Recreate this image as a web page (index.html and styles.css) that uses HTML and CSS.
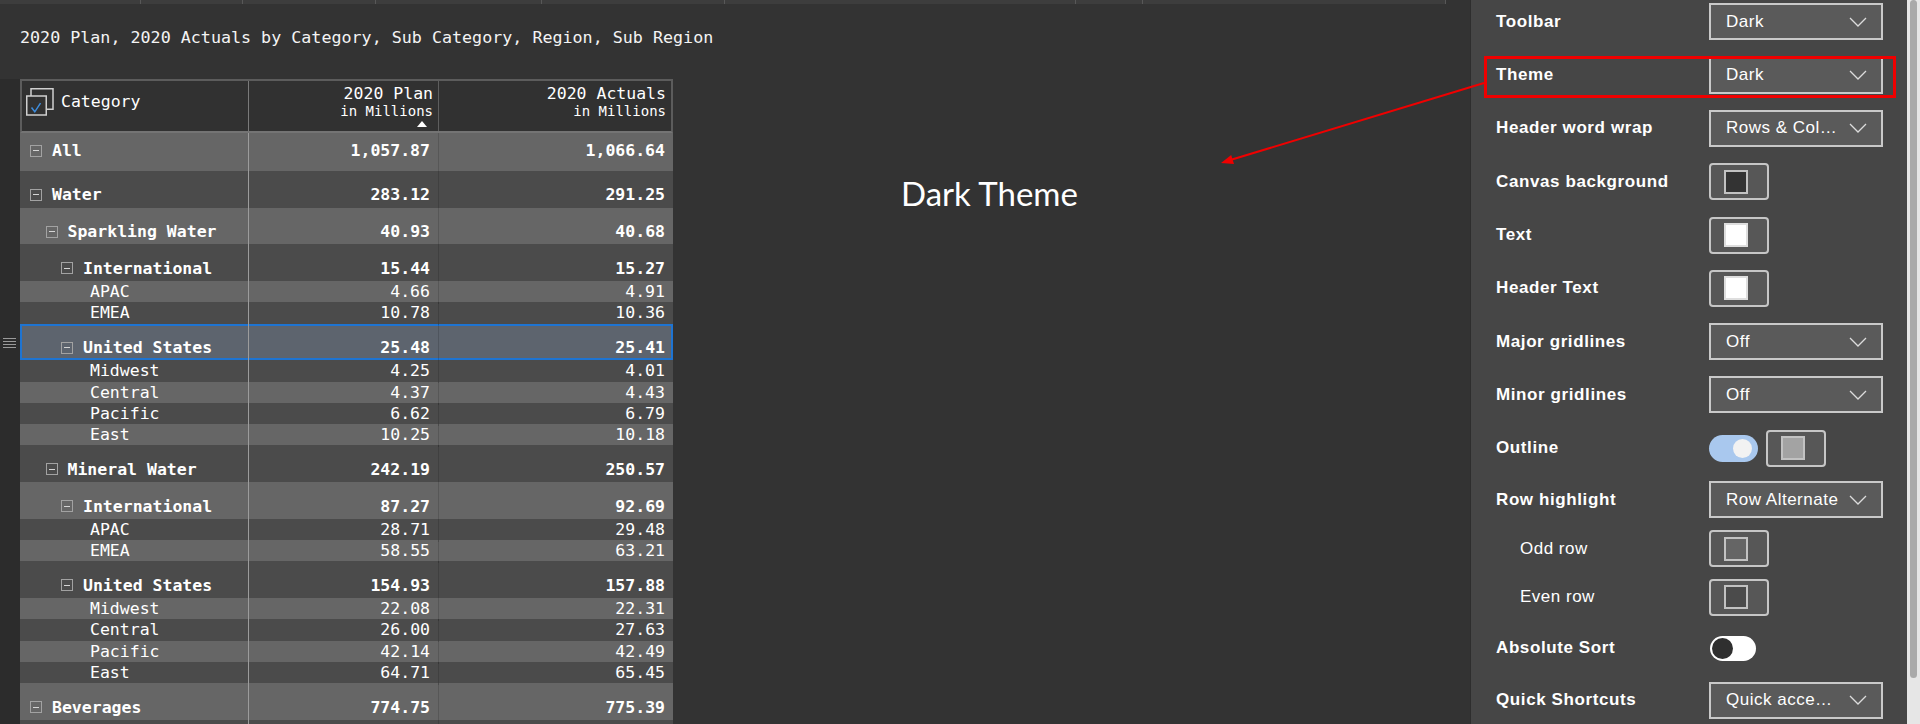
FILE: index.html
```html
<!DOCTYPE html>
<html lang="en">
<head>
<meta charset="utf-8">
<title>Dark Theme</title>
<link rel="stylesheet" href="styles.css">
</head>
<body>
<div class="app">
  <main class="canvas">
    <div class="topstrip"><span></span><span></span><span></span><span></span><span></span><span></span><span></span><span></span></div>
    <h1 class="title">2020 Plan, 2020 Actuals by Category, Sub Category, Region, Sub Region</h1>
    <section class="visual">
      <div class="gutter"><span class="grip"></span></div>
      <div class="matrix">
        <div class="mrow head">
          <div class="hcell hfirst">
            <svg class="pick" width="28" height="28" viewBox="0 0 28 28">
              <rect x="5" y="0.75" width="22" height="20.5" fill="none" stroke="#cfcfcf" stroke-width="1.5"/>
              <rect x="0.75" y="8" width="19.5" height="19" fill="#313131" stroke="#cfcfcf" stroke-width="1.5"/>
              <path d="M5.5 19.5 L8.8 23.8 L14.5 15.2" fill="none" stroke="#3e8ddd" stroke-width="1.5"/>
            </svg>
            <span>Category</span>
          </div>
          <div class="hcell hnum h2"><span class="hmain">2020 Plan</span><span class="hsub">in Millions</span><span class="sort"></span></div>
          <div class="hcell hnum h3"><span class="hmain">2020 Actuals</span><span class="hsub">in Millions</span></div>
        </div>

        <div class="mrow all light"><div class="cell c1 l0"><span class="tog"></span>All</div><div class="cell c2 num">1,057.87</div><div class="cell num">1,066.64</div></div>
        <div class="mrow prow dark"><div class="cell c1 l0"><span class="tog"></span>Water</div><div class="cell c2 num">283.12</div><div class="cell num">291.25</div></div>
        <div class="mrow prow light"><div class="cell c1 l1"><span class="tog"></span>Sparkling Water</div><div class="cell c2 num">40.93</div><div class="cell num">40.68</div></div>
        <div class="mrow prow dark"><div class="cell c1 l2"><span class="tog"></span>International</div><div class="cell c2 num">15.44</div><div class="cell num">15.27</div></div>
        <div class="mrow leaf light"><div class="cell c1 l3">APAC</div><div class="cell c2 num">4.66</div><div class="cell num">4.91</div></div>
        <div class="mrow leaf dark"><div class="cell c1 l3">EMEA</div><div class="cell c2 num">10.78</div><div class="cell num">10.36</div></div>
        <div class="mrow prow sel"><div class="cell c1 l2"><span class="tog"></span>United States</div><div class="cell c2 num">25.48</div><div class="cell num">25.41</div></div>
        <div class="mrow leaf dark"><div class="cell c1 l3">Midwest</div><div class="cell c2 num">4.25</div><div class="cell num">4.01</div></div>
        <div class="mrow leaf light"><div class="cell c1 l3">Central</div><div class="cell c2 num">4.37</div><div class="cell num">4.43</div></div>
        <div class="mrow leaf dark"><div class="cell c1 l3">Pacific</div><div class="cell c2 num">6.62</div><div class="cell num">6.79</div></div>
        <div class="mrow leaf light"><div class="cell c1 l3">East</div><div class="cell c2 num">10.25</div><div class="cell num">10.18</div></div>
        <div class="mrow prow dark"><div class="cell c1 l1"><span class="tog"></span>Mineral Water</div><div class="cell c2 num">242.19</div><div class="cell num">250.57</div></div>
        <div class="mrow prow light"><div class="cell c1 l2"><span class="tog"></span>International</div><div class="cell c2 num">87.27</div><div class="cell num">92.69</div></div>
        <div class="mrow leaf dark"><div class="cell c1 l3">APAC</div><div class="cell c2 num">28.71</div><div class="cell num">29.48</div></div>
        <div class="mrow leaf light"><div class="cell c1 l3">EMEA</div><div class="cell c2 num">58.55</div><div class="cell num">63.21</div></div>
        <div class="mrow prow dark"><div class="cell c1 l2"><span class="tog"></span>United States</div><div class="cell c2 num">154.93</div><div class="cell num">157.88</div></div>
        <div class="mrow leaf light"><div class="cell c1 l3">Midwest</div><div class="cell c2 num">22.08</div><div class="cell num">22.31</div></div>
        <div class="mrow leaf dark"><div class="cell c1 l3">Central</div><div class="cell c2 num">26.00</div><div class="cell num">27.63</div></div>
        <div class="mrow leaf light"><div class="cell c1 l3">Pacific</div><div class="cell c2 num">42.14</div><div class="cell num">42.49</div></div>
        <div class="mrow leaf dark"><div class="cell c1 l3">East</div><div class="cell c2 num">64.71</div><div class="cell num">65.45</div></div>
        <div class="mrow prow light"><div class="cell c1 l0"><span class="tog"></span>Beverages</div><div class="cell c2 num">774.75</div><div class="cell num">775.39</div></div>
        <div class="mrow prow dark"><div class="cell c1 l1"></div><div class="cell c2 num"></div><div class="cell num"></div></div>
      </div>
    </section>
    <div class="canvas-text">Dark Theme</div>
  </main>

  <aside class="pane">
    <div class="props">
      <div class="prop"><span class="plabel">Toolbar</span><div class="dd"><span>Dark</span><svg class="chev" width="18" height="10" viewBox="0 0 18 10"><polyline points="1,1 9,9 17,1" fill="none" stroke="#dcdcdc" stroke-width="1.3"/></svg></div></div>
      <div class="prop"><span class="plabel">Theme</span><div class="dd"><span>Dark</span><svg class="chev" width="18" height="10" viewBox="0 0 18 10"><polyline points="1,1 9,9 17,1" fill="none" stroke="#dcdcdc" stroke-width="1.3"/></svg></div><span class="hl"></span></div>
      <div class="prop"><span class="plabel">Header word wrap</span><div class="dd"><span>Rows &amp; Col…</span><svg class="chev" width="18" height="10" viewBox="0 0 18 10"><polyline points="1,1 9,9 17,1" fill="none" stroke="#dcdcdc" stroke-width="1.3"/></svg></div></div>
      <div class="prop"><span class="plabel">Canvas background</span><div class="sw"><span class="chip c-dark"></span></div></div>
      <div class="prop"><span class="plabel">Text</span><div class="sw"><span class="chip c-white"></span></div></div>
      <div class="prop"><span class="plabel">Header Text</span><div class="sw"><span class="chip c-white"></span></div></div>
      <div class="prop"><span class="plabel">Major gridlines</span><div class="dd"><span>Off</span><svg class="chev" width="18" height="10" viewBox="0 0 18 10"><polyline points="1,1 9,9 17,1" fill="none" stroke="#dcdcdc" stroke-width="1.3"/></svg></div></div>
      <div class="prop"><span class="plabel">Minor gridlines</span><div class="dd"><span>Off</span><svg class="chev" width="18" height="10" viewBox="0 0 18 10"><polyline points="1,1 9,9 17,1" fill="none" stroke="#dcdcdc" stroke-width="1.3"/></svg></div></div>
      <div class="prop"><span class="plabel">Outline</span><span class="tg on"><span class="knob"></span></span><div class="sw sw-gap"><span class="chip c-gray"></span></div></div>
      <div class="prop h50"><span class="plabel">Row highlight</span><div class="dd"><span>Row Alternate</span><svg class="chev" width="18" height="10" viewBox="0 0 18 10"><polyline points="1,1 9,9 17,1" fill="none" stroke="#dcdcdc" stroke-width="1.3"/></svg></div></div>
      <div class="prop sub"><span class="plabel">Odd row</span><div class="sw"><span class="chip c-odd"></span></div></div>
      <div class="prop sub h50"><span class="plabel">Even row</span><div class="sw"><span class="chip c-even"></span></div></div>
      <div class="prop h52"><span class="plabel">Absolute Sort</span><span class="tg off"><span class="knob"></span></span></div>
      <div class="prop h52"><span class="plabel">Quick Shortcuts</span><div class="dd"><span>Quick acce…</span><svg class="chev" width="18" height="10" viewBox="0 0 18 10"><polyline points="1,1 9,9 17,1" fill="none" stroke="#dcdcdc" stroke-width="1.3"/></svg></div></div>
    </div>
  </aside>

  <div class="vscroll"><div class="thumb"></div></div>

  <svg class="annot" width="1920" height="724" viewBox="0 0 1920 724">
    <line x1="1484" y1="83" x2="1232" y2="159.5" stroke="#f00000" stroke-width="2"/>
    <polygon points="1221,163 1234,164 1231.2,155" fill="#f00000"/>
  </svg>
</div>
</body>
</html>
```

FILE: styles.css
```css
* { box-sizing: border-box; margin: 0; padding: 0; }

html, body { width: 1920px; height: 724px; overflow: hidden; }

body {
  background: #333333;
  color: #ffffff;
  font-family: "DejaVu Sans Mono", "Liberation Mono", monospace;
}

.app { display: flex; height: 724px; position: relative; }

/* ---------- report canvas ---------- */
.canvas {
  width: 1470px;
  flex: none;
  display: flex;
  flex-direction: column;
  position: relative;
  background: #333333;
  overflow: hidden;
}
.canvas > * { flex: none; }

.topstrip {
  display: grid;
  grid-template-columns: 141px 102px 133px 166px 183px 351px 67px 303px;
  width: 1446px;
  height: 4px;
  background: #3d3d3d;
}
.topstrip span { border-right: 1px solid #585858; }

.title {
  margin: 22.7px 0 0 20px;
  font-size: 16.7px;
  line-height: 20px;
  font-weight: normal;
  white-space: nowrap;
  color: #f4f4f4;
}

.visual { display: flex; margin-top: 32.3px; }

.gutter { width: 20px; flex: none; background: #2c2c2c; padding: 259px 0 0 3px; }
.grip {
  display: block;
  width: 13px;
  height: 10px;
  background: repeating-linear-gradient(#9a9a9a 0 1px, transparent 1px 3px);
}

.matrix { width: 653px; flex: none; font-size: 16.5px; }

.mrow { display: grid; grid-template-columns: 229px 190px 234px; }

/* header */
.head {
  height: 54px;
  grid-template-columns: 227px 190px 232px;
  border: 2px solid #5c5c5c;
  border-bottom-color: #747474;
  background: #313131;
}
.hcell { display: flex; }
.hfirst {
  align-items: center;
  padding: 0 0 8px 4px;
  gap: 7px;
  border-right: 1px solid #7a7a7a;
}
.pick { flex: none; }
.hnum {
  flex-direction: column;
  align-items: flex-end;
  padding-top: 3px;
}
.h2 { padding-right: 5px; border-right: 1px solid #5e5e5e; }
.h3 { padding-right: 5px; }
.hmain { line-height: 19px; }
.hsub { font-size: 14px; line-height: 17px; }
.sort {
  margin: 1px 6px 0 0;
  width: 0;
  height: 0;
  border-left: 5.5px solid transparent;
  border-right: 5.5px solid transparent;
  border-bottom: 6px solid #ffffff;
}

/* body rows */
.cell { display: flex; align-items: center; white-space: nowrap; line-height: 21px; }
.c1 { border-right: 1px solid #9c9c9c; }
.c2 { border-right: 1px solid rgba(0, 0, 0, 0.14); }
.num { justify-content: flex-end; padding-right: 8px; }

.l0 { padding-left: 10px; }
.l1 { padding-left: 25.5px; }
.l2 { padding-left: 41px; }
.l3 { padding-left: 70px; }

.all { height: 38px; font-weight: bold; }
.all .cell { padding-bottom: 2px; }
.prow { height: 36.75px; font-weight: bold; }
.prow .cell { padding-top: 11.25px; }
.leaf { height: 21.25px; }
.leaf .cell { padding-bottom: 2px; }

.light { background: #666666; }
.dark { background: #4b4b4b; }
.sel { background: #5d646e; box-shadow: inset 0 0 0 2px #1e74d2; }

.tog {
  flex: none;
  position: relative;
  width: 12px;
  height: 12px;
  margin-right: 10px;
  border: 1px solid #a2a2a2;
}
.tog::after {
  content: "";
  position: absolute;
  left: 2px;
  right: 2px;
  top: 4.5px;
  height: 1px;
  background: #d4d4d4;
}

.canvas-text {
  position: absolute;
  left: 901px;
  top: 177px;
  font-family: Lato, "Open Sans", sans-serif;
  font-size: 33px;
  line-height: 32px;
  color: #ffffff;
}

/* ---------- format pane ---------- */
.pane {
  width: 437px;
  flex: none;
  background: #464646;
  border-left: 1px solid #2e2e2e;
  font-family: "Liberation Sans", Arial, sans-serif;
  color: #ffffff;
  overflow: hidden;
}
.props { margin-top: -4.8px; }
.prop {
  position: relative;
  display: flex;
  align-items: center;
  height: 53.3px;
  padding-left: 25px;
}
.prop.h50 { height: 50px; }
.prop.h52 { height: 52px; }
.prop.sub { height: 47.5px; }
.prop.sub.h50 { height: 50px; }

.plabel {
  width: 213px;
  flex: none;
  font-size: 17px;
  font-weight: bold;
  letter-spacing: 0.6px;
  white-space: nowrap;
}
.sub .plabel { font-weight: normal; padding-left: 24px; letter-spacing: 0.5px; }

.dd {
  width: 174px;
  height: 37px;
  display: flex;
  align-items: center;
  justify-content: space-between;
  padding: 0 14px 0 15px;
  border: 2px solid #c9c9c9;
  background: #5a5a5a;
  font-size: 17px;
  letter-spacing: 0.5px;
  white-space: nowrap;
}
.chev { flex: none; }

.sw {
  width: 60px;
  height: 37px;
  display: flex;
  align-items: center;
  padding-left: 13px;
  border: 2px solid #c6c6c6;
  border-radius: 4px;
  background: #575757;
}
.sw-gap { margin-left: 8px; }
.chip { width: 24px; height: 24px; border: 2px solid #c2c2c2; }
.c-dark { background: #333333; }
.c-white { background: #ffffff; border-color: #dedede; }
.c-gray { background: #a3a3a3; }
.c-odd { background: #656565; }
.c-even { background: #4b4b4b; }

.tg { display: flex; align-items: center; border-radius: 14px; flex: none; }
.tg.on {
  width: 49px;
  height: 27px;
  justify-content: flex-end;
  padding-right: 6px;
  background: #a9c8ee;
}
.tg.on .knob { width: 19px; height: 19px; border-radius: 50%; background: #f2f2f2; }
.tg.off {
  width: 46px;
  height: 25px;
  margin-left: 1px;
  padding-left: 2px;
  background: #ffffff;
}
.tg.off .knob { width: 21px; height: 21px; border-radius: 50%; background: #2f2f2f; }

.hl {
  position: absolute;
  left: 13px;
  right: 11px;
  top: 7.5px;
  bottom: 4px;
  border: 3px solid #f00000;
}

.vscroll { width: 13px; flex: none; background: #e6e6e6; padding-left: 3px; }
.thumb { width: 7px; height: 678px; border-radius: 4px; background: #a9a9a9; }

.annot { position: absolute; left: 0; top: 0; pointer-events: none; }
```
